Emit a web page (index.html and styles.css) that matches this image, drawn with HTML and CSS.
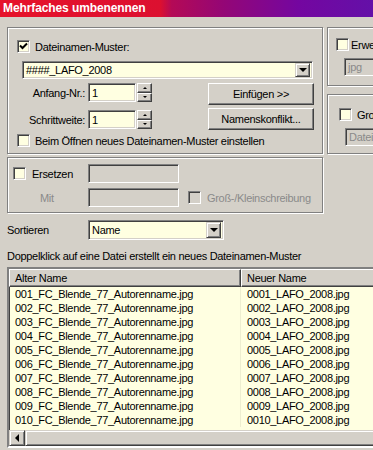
FILE: index.html
```html
<!DOCTYPE html>
<html lang="de">
<head>
  <meta charset="UTF-8" />
  <meta name="viewport" content="width=device-width, initial-scale=1.0"/>
  <title>Mehrfaches umbenennen</title>
  <link rel="stylesheet" href="styles.css">
</head>
<body>

  <div class="titlebar">Mehrfaches umbenennen</div>

  <div class="dialog">
    <div class="top">
      <div class="group muster">
        <div class="check">
          <span class="box"><svg width="9" height="9" viewBox="0 0 9 9"><path d="M1 3.5 L3.5 6 L8 1.5" fill="none" stroke="#000" stroke-width="2"/></svg></span>
          Dateinamen-Muster:
        </div>
        <div class="combo pattern"><span class="val">####_LAFO_2008</span><span class="drop"><i class="tri-down"></i></span></div>
        <div class="counter">
          <div class="fields">
            <div class="field">
              <span class="lbl">Anfang-Nr.:</span>
              <span class="input num">1</span>
              <span class="spin"><span class="half"><i class="tri-up"></i></span><span class="half"><i class="tri-down"></i></span></span>
            </div>
            <div class="field">
              <span class="lbl">Schrittweite:</span>
              <span class="input num">1</span>
              <span class="spin"><span class="half"><i class="tri-up"></i></span><span class="half"><i class="tri-down"></i></span></span>
            </div>
          </div>
          <div class="buttons">
            <button class="btn">Einfügen &gt;&gt;</button>
            <button class="btn">Namenskonflikt...</button>
          </div>
        </div>
        <div class="check open"><span class="box"></span>Beim Öffnen neues Dateinamen-Muster einstellen</div>
      </div>

      <div class="side">
        <div class="group ext">
          <div class="check"><span class="box"></span>Erweiterung</div>
          <span class="input off">jpg</span>
        </div>
        <div class="group case">
          <div class="check"><span class="box"></span>Groß-/Kleinschreibung</div>
          <span class="input off">Dateiname</span>
        </div>
      </div>
    </div>

    <div class="group replace">
      <div class="check"><span class="box"></span>Ersetzen</div>
      <span class="input off"></span>
      <span></span>
      <span class="lbl-mit">Mit</span>
      <span class="input off"></span>
      <div class="check dim"><span class="box off"></span>Groß-/Kleinschreibung</div>
    </div>

    <div class="sort-row">
      <span class="sort-lbl">Sortieren</span>
      <div class="combo sort"><span class="val">Name</span><span class="drop"><i class="tri-down"></i></span></div>
    </div>

    <p class="hint">Doppelklick auf eine Datei erstellt ein neues Dateinamen-Muster</p>

    <div class="list">
      <div class="head">
        <span class="hcell">Alter Name</span>
        <span class="hcell">Neuer Name</span>
      </div>
      <div class="rows">
        <div class="row"><span>001_FC_Blende_77_Autorenname.jpg</span><span>0001_LAFO_2008.jpg</span></div>
        <div class="row"><span>002_FC_Blende_77_Autorenname.jpg</span><span>0002_LAFO_2008.jpg</span></div>
        <div class="row"><span>003_FC_Blende_77_Autorenname.jpg</span><span>0003_LAFO_2008.jpg</span></div>
        <div class="row"><span>004_FC_Blende_77_Autorenname.jpg</span><span>0004_LAFO_2008.jpg</span></div>
        <div class="row"><span>005_FC_Blende_77_Autorenname.jpg</span><span>0005_LAFO_2008.jpg</span></div>
        <div class="row"><span>006_FC_Blende_77_Autorenname.jpg</span><span>0006_LAFO_2008.jpg</span></div>
        <div class="row"><span>007_FC_Blende_77_Autorenname.jpg</span><span>0007_LAFO_2008.jpg</span></div>
        <div class="row"><span>008_FC_Blende_77_Autorenname.jpg</span><span>0008_LAFO_2008.jpg</span></div>
        <div class="row"><span>009_FC_Blende_77_Autorenname.jpg</span><span>0009_LAFO_2008.jpg</span></div>
        <div class="row"><span>010_FC_Blende_77_Autorenname.jpg</span><span>0010_LAFO_2008.jpg</span></div>
      </div>
      <div class="hscroll">
        <span class="arrow"><i class="tri-left"></i></span>
        <span class="thumb"></span>
      </div>
    </div>
  </div>

</body>
</html>
```

FILE: styles.css
```css
* {
  box-sizing: border-box;
}
html, body {
  margin: 0;
}
body {
  width: 373px;
  height: 450px;
  overflow: hidden;
  background: #d4d0c8;
  font-family: "Liberation Sans", Arial, sans-serif;
  font-size: 11px;
  letter-spacing: -0.3px;
  color: #000;
}
.titlebar {
  height: 17px;
  line-height: 17px;
  padding-left: 3px;
  color: #fff;
  font-size: 12px;
  font-weight: bold;
  letter-spacing: -0.1px;
  background: linear-gradient(to right, #e6122a 0%, #dc1030 43%, #b40a56 46%, #940676 60%, #7406a0 80%, #6410a8 100%);
}
.dialog {
  padding: 10px 0 0 7px;
  width: 420px;
}
.top {
  display: flex;
  gap: 4px;
}

/* group boxes */
.group {
  border: 1px solid #808080;
  box-shadow: inset 1px 1px 0 #fff, 1px 1px 0 #fff;
  flex-shrink: 0;
}
.muster {
  width: 316px;
  height: 127px;
  padding: 12px 0 0 9px;
}
.side {
  display: flex;
  flex-direction: column;
  gap: 8px;
}
.ext, .case {
  width: 46px;
  overflow: hidden;
  border-right: 0;
}
.ext {
  height: 59px;
  padding: 10px 0 0 8px;
}
.case {
  height: 60px;
  padding: 13px 0 0 11px;
}
.ext .input {
  margin: 7px 0 0 8px;
  width: 70px;
  height: 18px;
}
.case .input {
  margin: 7px 0 0 6px;
  width: 70px;
  height: 18px;
}
.ext .check {
  gap: 2px;
}

/* checkbox */
.check {
  display: flex;
  align-items: center;
  gap: 5px;
  height: 13px;
  white-space: nowrap;
}
.box {
  width: 13px;
  height: 13px;
  flex-shrink: 0;
  display: flex;
  align-items: center;
  justify-content: center;
  border: 1px solid;
  border-color: #808080 #fff #fff #808080;
  box-shadow: inset 1px 1px 0 #404040, inset -1px -1px 0 #d4d0c8;
  background: #ffffe1;
}
.box.off {
  background: #d4d0c8;
}
.check.dim {
  color: #8a8a8a;
}

/* sunken fields */
.input, .combo {
  border: 1px solid;
  border-color: #808080 #fff #fff #808080;
  box-shadow: inset 1px 1px 0 #404040, inset -1px -1px 0 #d4d0c8;
  background: #ffffe1;
  display: flex;
  align-items: center;
  padding-left: 3px;
  white-space: nowrap;
  overflow: hidden;
}
.input.off {
  background: #d4d0c8;
  color: #8a8a8a;
}
.combo {
  padding: 2px 2px 2px 3px;
}
.combo .val {
  flex: 1;
}
.pattern {
  margin: 8px 0 0 5px;
  width: 291px;
  height: 18px;
}
.drop {
  width: 15px;
  height: 14px;
  display: flex;
  align-items: center;
  justify-content: center;
  background: #d4d0c8;
  border: 1px solid;
  border-color: #d4d0c8 #404040 #404040 #d4d0c8;
  box-shadow: inset 1px 1px 0 #fff, inset -1px -1px 0 #808080;
}
.tri-down, .tri-up, .tri-left {
  width: 0;
  height: 0;
  border: 0 solid transparent;
}
.tri-down {
  border-width: 4px 4px 0;
  border-top-color: #000;
}
.tri-up {
  border-width: 0 2px 2px;
  border-bottom-color: #000;
}
.spin .tri-down {
  border-width: 2px 2px 0;
}
.tri-left {
  border-width: 4px 4px 4px 0;
  border-right-color: #000;
}

/* counter area */
.counter {
  display: flex;
  justify-content: space-between;
  margin-top: 4px;
  padding-right: 8px;
}
.fields {
  display: flex;
  flex-direction: column;
  gap: 8px;
}
.field {
  display: flex;
  align-items: center;
  height: 19px;
}
.lbl {
  width: 68px;
  text-align: right;
  margin-right: 3px;
}
.num {
  width: 48px;
  height: 19px;
}
.spin {
  display: flex;
  flex-direction: column;
  margin-left: 1px;
  width: 15px;
  height: 19px;
}
.half {
  flex: 1;
  display: flex;
  align-items: center;
  justify-content: center;
  background: #d4d0c8;
  border: 1px solid;
  border-color: #fff #404040 #404040 #fff;
  box-shadow: inset -1px -1px 0 #808080;
}
.buttons {
  display: flex;
  flex-direction: column;
  gap: 3px;
}
.btn {
  width: 106px;
  height: 22px;
  padding: 0;
  font: inherit;
  letter-spacing: inherit;
  color: #000;
  background: #d4d0c8;
  border: 1px solid;
  border-color: #fff #404040 #404040 #fff;
  box-shadow: inset -1px -1px 0 #808080;
}
.open {
  margin-top: 4px;
}

/* replace box */
.replace {
  margin-top: 3px;
  width: 316px;
  height: 56px;
  padding-top: 6px;
  display: grid;
  grid-template-columns: 80px 91px 1fr;
  grid-auto-rows: 19px;
  row-gap: 5px;
  align-items: center;
}
.replace > .check:first-child {
  padding-left: 5px;
  gap: 6px;
}
.replace .input {
  height: 19px;
}
.replace .dim {
  margin-left: 9px;
  gap: 6px;
}
.lbl-mit {
  padding-left: 32px;
  color: #8a8a8a;
}

/* sort */
.sort-row {
  display: flex;
  align-items: center;
  margin-top: 7px;
}
.sort-lbl {
  width: 81px;
}
.sort {
  width: 136px;
  height: 20px;
}
.sort .drop {
  height: 16px;
}
.hint {
  margin: 10px 0 0;
  height: 13px;
  line-height: 13px;
}

/* list */
.list {
  margin-top: 4px;
  width: 400px;
  height: 181px;
  border: 2px solid;
  border-color: #808080 #fff #fff #808080;
  box-shadow: inset 1px 1px 0 #404040;
  background: #ffffe1;
  display: flex;
  flex-direction: column;
}
.head {
  display: grid;
  grid-template-columns: 232px 1fr;
  height: 18px;
  flex-shrink: 0;
}
.hcell {
  background: #d4d0c8;
  border: 1px solid;
  border-color: #fff #404040 #404040 #fff;
  box-shadow: inset -1px -1px 0 #808080;
  padding-left: 5px;
  line-height: 16px;
}
.rows {
  height: 143px;
}
.row {
  display: grid;
  grid-template-columns: 232px 1fr;
  height: 14px;
  line-height: 14px;
}
.row span {
  padding-left: 6px;
  white-space: nowrap;
}
.row span:first-child {
  border-right: 1px solid #eeeed0;
}
.hscroll {
  display: flex;
  height: 16px;
  background: #e6e3de;
}
.arrow {
  width: 16px;
  display: flex;
  align-items: center;
  justify-content: center;
  background: #d4d0c8;
  border: 1px solid;
  border-color: #d4d0c8 #404040 #404040 #d4d0c8;
  box-shadow: inset 1px 1px 0 #fff, inset -1px -1px 0 #808080;
}
.thumb {
  flex: 1;
  background: #d4d0c8;
  border: 1px solid;
  border-color: #d4d0c8 #404040 #404040 #d4d0c8;
  box-shadow: inset 1px 1px 0 #fff, inset -1px -1px 0 #808080;
}
```
